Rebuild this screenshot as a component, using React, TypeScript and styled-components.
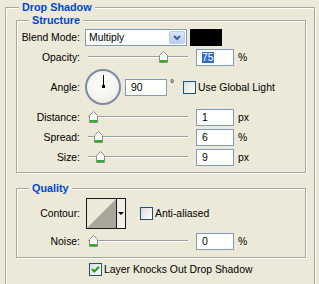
import React from 'react';
import styled, { createGlobalStyle } from 'styled-components';

const GlobalStyle = createGlobalStyle`
  html, body {
    margin: 0;
    padding: 0;
    background: #ece9d8;
    overflow: hidden;
  }
  body {
    font-family: "Liberation Sans", Arial, sans-serif;
    font-size: 10.4px;
    color: #000;
  }
`;

// Etched group box (XP dialog style)
const GroupBox = styled.div<{ $mt?: number; $ml?: number; $mr?: number; $pb?: number }>`
  margin: ${p => p.$mt ?? 0}px ${p => p.$mr ?? 0}px 0 ${p => p.$ml ?? 0}px;
  padding-bottom: ${p => p.$pb ?? 0}px;
  border: 1px solid #aca899;
  box-shadow: inset 1px 1px 0 #fff, 1px 1px 0 #fff;
`;

const OuterBox = styled(GroupBox)`
  box-sizing: border-box;
  border-bottom: none;
  height: calc(100vh - 7px);
`;

const LegendRow = styled.div<{ $indent: number }>`
  height: 13px;
  margin-top: -7px;
  padding-left: ${p => p.$indent}px;
`;

const Legend = styled.span`
  display: inline-block;
  padding: 0 3px;
  background: #ece9d8;
  color: #0046d5;
  font-weight: bold;
  font-size: 10.8px;
  line-height: 13px;
`;

const Row = styled.div<{ $h: number; $mt?: number }>`
  display: flex;
  align-items: center;
  height: ${p => p.$h}px;
  margin-top: ${p => p.$mt ?? 0}px;
`;

const Label = styled.span`
  width: 63px;
  flex: none;
  text-align: right;
  white-space: nowrap;
`;

const Select = styled.div`
  box-sizing: border-box;
  margin-left: 5px;
  width: 102px;
  height: 17px;
  border: 1px solid #7f9db9;
  background: #fff;
  display: flex;
  align-items: center;
  justify-content: space-between;
  padding: 0 1px 0 3px;
`;

const SelectButton = styled.div`
  box-sizing: border-box;
  width: 16px;
  height: 13px;
  border: 1px solid #b7c9f3;
  border-radius: 2px;
  background: linear-gradient(180deg, #dae5fd 0%, #b9cdfa 100%);
  display: flex;
  align-items: center;
  justify-content: center;
`;

const Swatch = styled.div`
  margin-left: 3px;
  width: 32px;
  height: 17px;
  background: #000;
`;

const SliderWrap = styled.div`
  position: relative;
  margin-left: 8px;
  width: 100px;
  height: 12px;
  display: flex;
  align-items: center;
`;

const TrackLine = styled.div`
  width: 100%;
  height: 0;
  border-top: 1px solid #9d9d9d;
  border-bottom: 1px solid #fff;
`;

const Thumb = styled.svg`
  position: absolute;
  top: 0;
  width: 9px;
  height: 12px;
`;

const Field = styled.div<{ $w: number; $ml: number }>`
  box-sizing: border-box;
  margin-left: ${p => p.$ml}px;
  width: ${p => p.$w}px;
  height: 17px;
  border: 1px solid #7f9db9;
  background: #fff;
  padding-left: 5px;
  line-height: 15px;
`;

const Selected = styled.span`
  background: #316ac5;
  color: #fff;
`;

const Unit = styled.span`
  margin-left: 4px;
`;

const Degree = styled.span`
  margin-left: 3px;
  width: 5px;
  align-self: flex-start;
  margin-top: 11px;
`;

const Dial = styled.div`
  box-sizing: border-box;
  margin-left: 5px;
  width: 36px;
  height: 36px;
  border-radius: 50%;
  border: 2px solid #7d8aa8;
  background: radial-gradient(circle at 45% 40%, #ffffff 0%, #f3f2ec 60%, #e2e0d6 100%);
  display: flex;
  justify-content: center;
`;

const DialHand = styled.div`
  margin-top: 4px;
  width: 1px;
  height: 12px;
  background: #000;
  position: relative;
  &::after {
    content: '';
    position: absolute;
    left: -1px;
    bottom: -1px;
    width: 3px;
    height: 3px;
    background: #000;
  }
`;

const CheckBox = styled.div<{ $ml: number }>`
  box-sizing: border-box;
  flex: none;
  margin-left: ${p => p.$ml}px;
  width: 13px;
  height: 13px;
  border: 1px solid #1c5180;
  background: linear-gradient(135deg, #dcdcd7 0%, #ffffff 100%);
  display: flex;
  align-items: center;
  justify-content: center;
`;

const CheckText = styled.span`
  margin-left: 2px;
  white-space: nowrap;
`;

const Contour = styled.div`
  box-sizing: border-box;
  margin-left: 6px;
  width: 40px;
  height: 31px;
  border: 1px solid #1a1a1a;
  display: flex;
`;

const ContourPreview = styled.svg`
  width: 29px;
  height: 29px;
  border-right: 1px solid #1a1a1a;
  background: #ece9d8;
`;

const ContourArrow = styled.div`
  flex: 1;
  display: flex;
  align-items: center;
  justify-content: center;
  background: #f2f0e6;
  &::after {
    content: '';
    border-left: 3px solid transparent;
    border-right: 3px solid transparent;
    border-top: 3px solid #000;
  }
`;

const KnockRow = styled(Row)`
  padding-left: 83px;
`;

const Slider: React.FC<{ pos: number }> = ({ pos }) => (
  <SliderWrap>
    <TrackLine />
    <Thumb viewBox="0 0 9 12" style={{ left: `${pos}px` }}>
      <path d="M0.5 4.5 L4.5 0.5 L8.5 4.5 L8.5 11.5 L0.5 11.5 Z" fill="#fff" stroke="#8c8c8c" />
      <rect x="1" y="9" width="7" height="2" fill="#2fae2f" />
    </Thumb>
  </SliderWrap>
);

const Check: React.FC<{ ml: number; checked?: boolean }> = ({ ml, checked }) => (
  <CheckBox $ml={ml}>
    {checked && (
      <svg width="11" height="11" viewBox="0 0 11 11">
        <path d="M2 5 L4.3 7.5 L9 2.8" fill="none" stroke="#21a121" strokeWidth="2.2" />
      </svg>
    )}
  </CheckBox>
);

const SliderRow: React.FC<{ label: string; value: string; unit: string; pos: number; h?: number; selected?: boolean }> = ({
  label,
  value,
  unit,
  pos,
  h = 20,
  selected,
}) => (
  <Row $h={h}>
    <Label>{label}</Label>
    <Slider pos={pos} />
    <Field $w={38} $ml={8}>{selected ? <Selected>{value}</Selected> : value}</Field>
    <Unit>{unit}</Unit>
  </Row>
);

export default function App() {
  return (
    <>
      <GlobalStyle />
      <OuterBox $mt={7} $ml={5} $mr={4}>
        <LegendRow $indent={13}>
          <Legend>Drop Shadow</Legend>
        </LegendRow>

        <GroupBox $mt={6} $ml={10} $mr={8} $pb={5}>
          <LegendRow $indent={12}>
            <Legend>Structure</Legend>
          </LegendRow>
          <Row $h={19} $mt={1}>
            <Label>Blend Mode:</Label>
            <Select>
              <span>Multiply</span>
              <SelectButton>
                <svg width="8" height="6" viewBox="0 0 8 6">
                  <path d="M1 1 L4 4 L7 1" fill="none" stroke="#4d6185" strokeWidth="2" />
                </svg>
              </SelectButton>
            </Select>
            <Swatch />
          </Row>
          <SliderRow label="Opacity:" value="75" unit="%" pos={71} selected />
          <Row $h={40}>
            <Label>Angle:</Label>
            <Dial>
              <DialHand />
            </Dial>
            <Field $w={42} $ml={4}>90</Field>
            <Degree>°</Degree>
            <Check ml={8} />
            <CheckText>Use Global Light</CheckText>
          </Row>
          <SliderRow label="Distance:" value="1" unit="px" pos={1} />
          <SliderRow label="Spread:" value="6" unit="%" pos={6} />
          <SliderRow label="Size:" value="9" unit="px" pos={8} />
        </GroupBox>

        <GroupBox $mt={15} $ml={10} $mr={8} $pb={6}>
          <LegendRow $indent={12}>
            <Legend>Quality</Legend>
          </LegendRow>
          <Row $h={35} $mt={1}>
            <Label>Contour:</Label>
            <Contour>
              <ContourPreview viewBox="0 0 29 29">
                <path d="M0 29 L29 0 L29 29 Z" fill="#aaa699" />
              </ContourPreview>
              <ContourArrow />
            </Contour>
            <Check ml={14} />
            <CheckText>Anti-aliased</CheckText>
          </Row>
          <SliderRow label="Noise:" value="0" unit="%" pos={1} />
        </GroupBox>

        <KnockRow $h={20} $mt={1}>
          <Check ml={0} checked />
          <CheckText>Layer Knocks Out Drop Shadow</CheckText>
        </KnockRow>
      </OuterBox>
    </>
  );
}
